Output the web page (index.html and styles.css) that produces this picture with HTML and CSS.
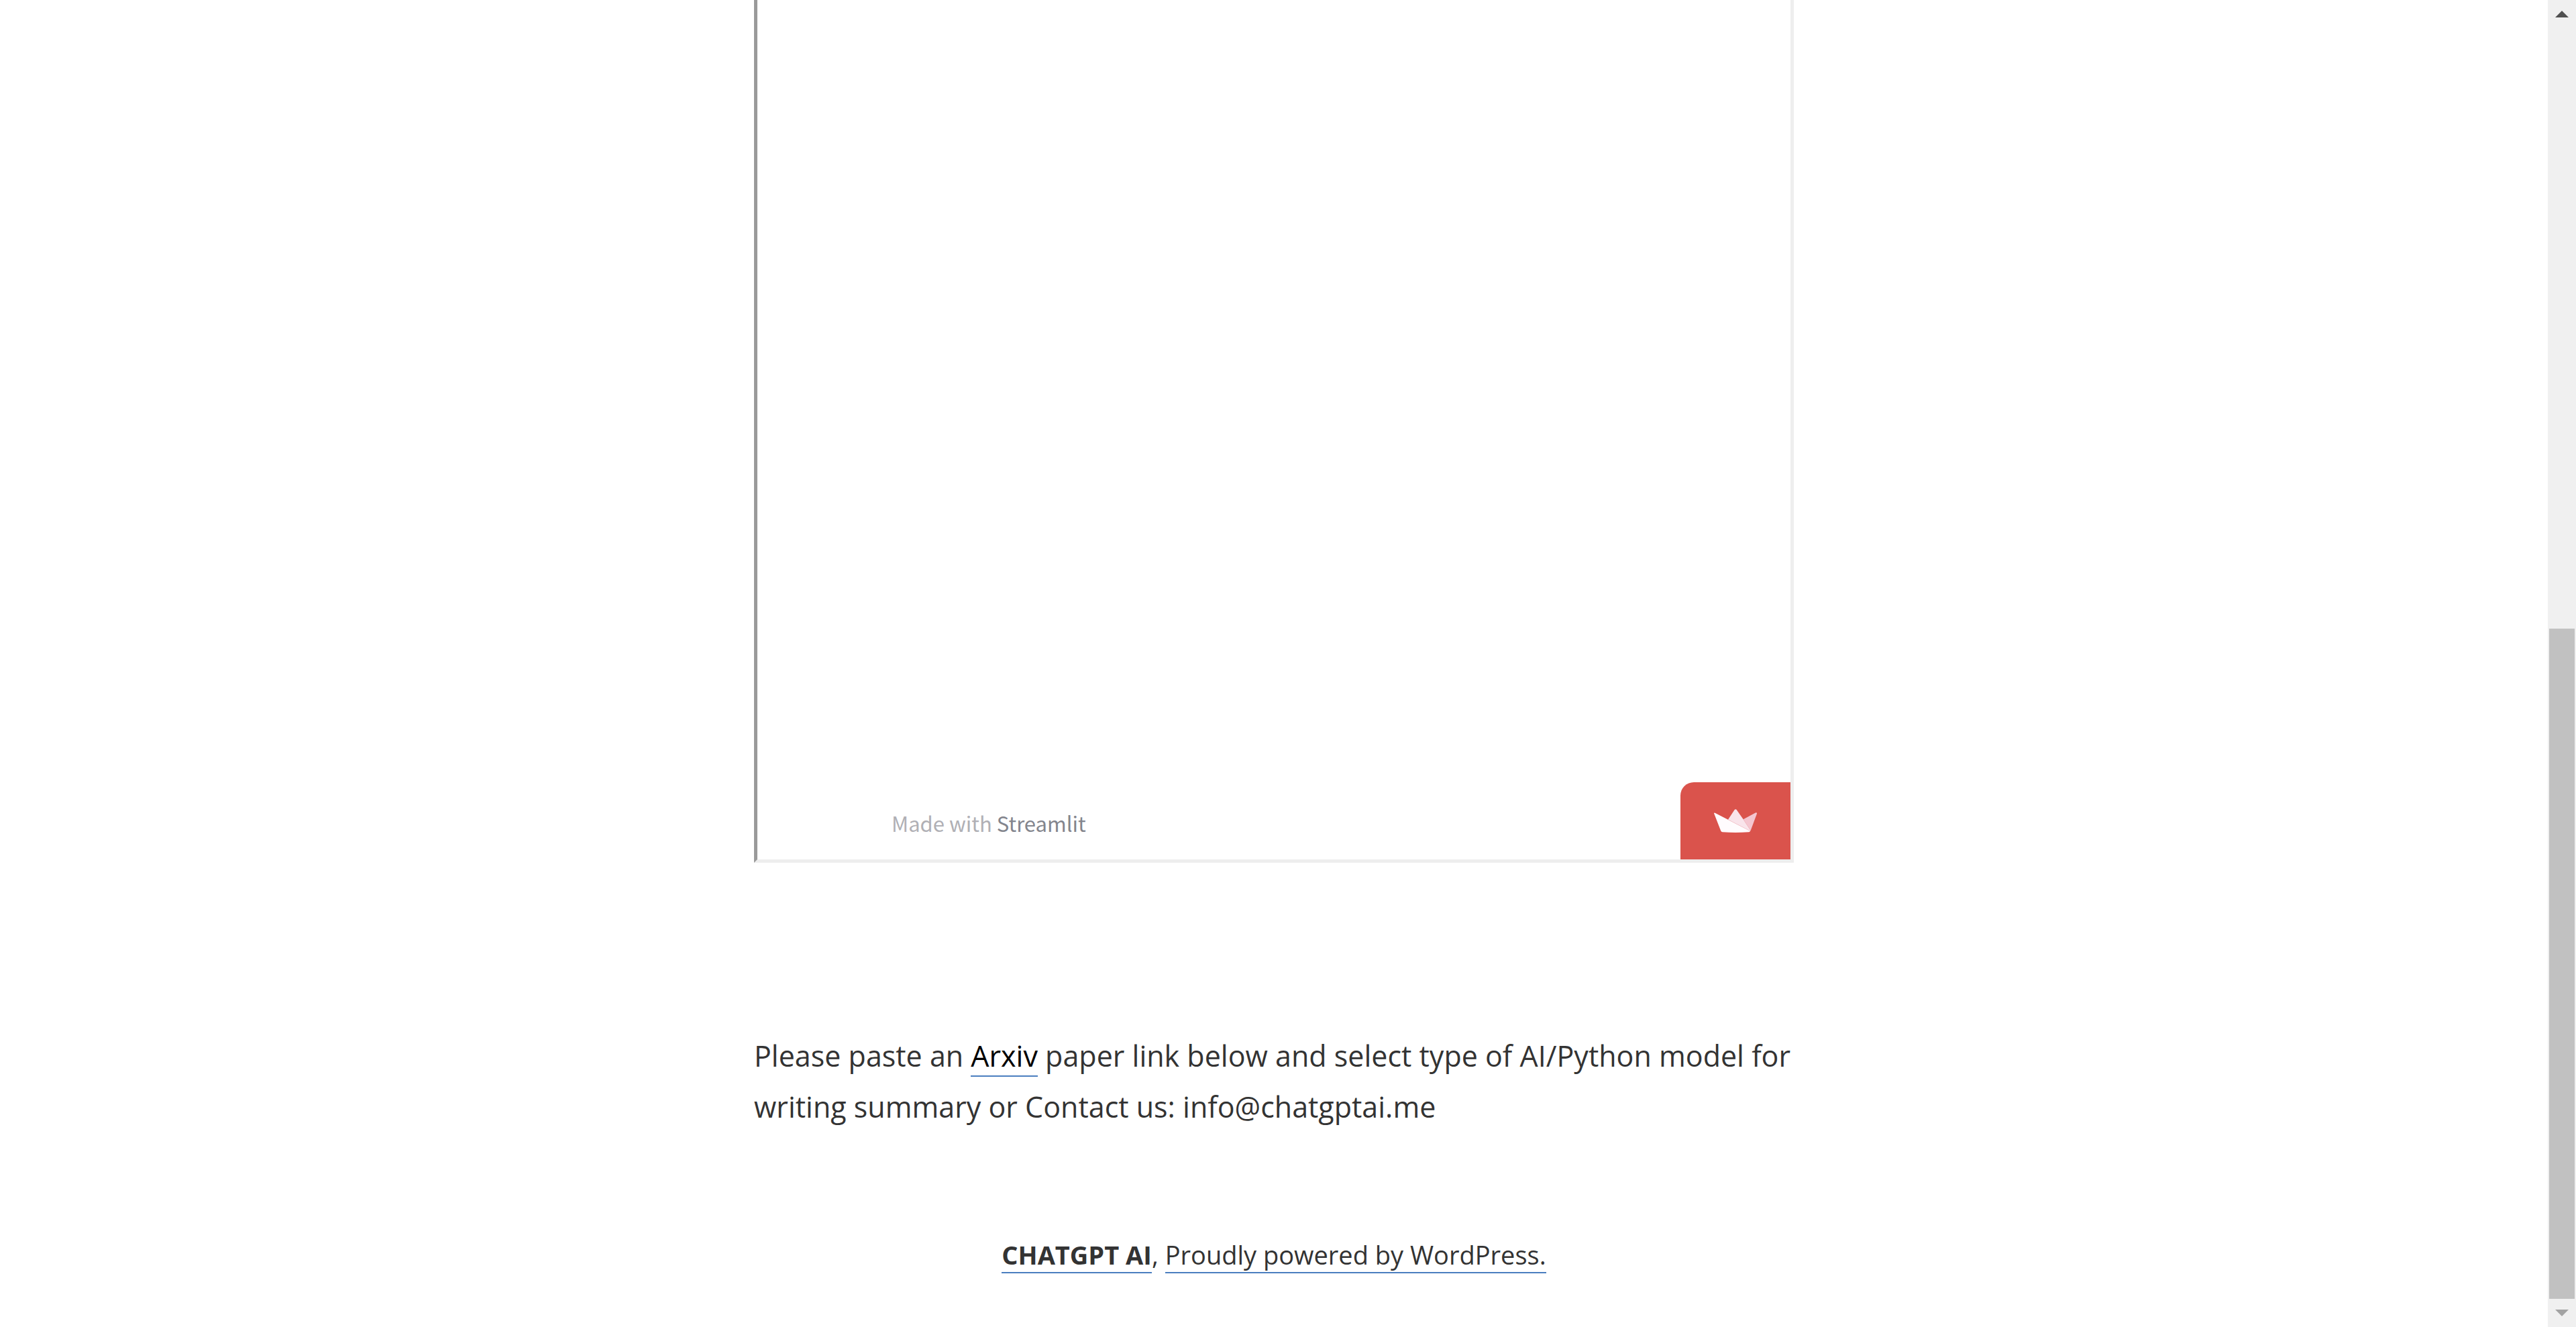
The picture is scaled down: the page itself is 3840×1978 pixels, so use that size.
FILE: index.html
```html
<!DOCTYPE html>
<html lang="en">
<head>
<meta charset="utf-8">
<meta name="viewport" content="width=device-width, initial-scale=1">
<title>CHATGPT AI</title>
<link rel="stylesheet" href="styles.css">
</head>
<body>
<div class="window">
  <div class="page">
    <main class="content">
      <section class="embed" aria-label="Streamlit app">
        <p class="embed-credit">Made with <a href="#streamlit">Streamlit</a></p>
        <a class="embed-badge" href="#cloud" aria-label="Hosted with Streamlit">
          <svg class="crown" viewBox="0 0 192 105" aria-hidden="true">
            <path fill="#f4c6d0" d="M131 46 187 16Q193 15 192 20L164 96Z"/>
            <path fill="#f9e4eb" d="M63 47 92 3Q97-2 101 3L131 46 164 96 161 98Z"/>
            <path fill="#fffcfe" d="M0 19Q1 15 6 18L162 98Q160 103 155 103Q96 107 38 103Q33 102 31 98Z"/>
            <path fill="none" stroke="#f3c3cc" stroke-width="2" d="M63 47 162 98"/>
          </svg>
        </a>
      </section>
      <p class="intro">Please paste an <a href="#arxiv">Arxiv</a> paper link below and select type of AI/Python model for writing summary or Contact us: info@chatgptai.me</p>
    </main>
    <footer class="site-footer"><a class="site-name" href="#home">CHATGPT AI</a>, <a href="#wordpress">Proudly powered by WordPress.</a></footer>
  </div>
  <div class="scrollbar">
    <button class="arrow" type="button" aria-label="Scroll up"><svg viewBox="0 0 20 10"><path fill="#505050" d="M0 10 10 0 20 10Z"/></svg></button>
    <div class="track"><div class="thumb"></div></div>
    <button class="arrow" type="button" aria-label="Scroll down"><svg viewBox="0 0 20 10"><path fill="#a3a3a3" d="M0 0H20L10 10Z"/></svg></button>
  </div>
</div>
</body>
</html>
```
FILE: styles.css
```css
* {
  box-sizing: border-box;
}

body {
  margin: 0;
  background: #fff;
  color: #333;
  font-family: "Segoe UI", "Open Sans", "Noto Sans", sans-serif;
}

.window {
  display: flex;
  min-height: 100vh;
}

.page {
  flex: 1;
  min-width: 0;
  display: flex;
  flex-direction: column;
  align-items: center;
  padding-bottom: 70px;
}

.content {
  flex: 1;
  display: flex;
  flex-direction: column;
  width: 100%;
  max-width: 1550px;
}

/* Embedded app, scrolled past its top edge */
.embed {
  flex: 1;
  display: flex;
  align-items: flex-end;
  justify-content: space-between;
  border: 5px solid #eee;
  border-top: 0;
  border-left-color: #9a9a9a;
}

.embed-credit {
  margin: 0 0 28px 200px;
  font-family: "Source Sans Pro", "Noto Sans CJK SC", sans-serif;
  font-size: 31px;
  line-height: 52px;
  color: #b0b0b5;
}

.embed-credit a {
  color: #83858d;
  text-decoration: none;
}

.embed-badge {
  display: flex;
  align-items: center;
  justify-content: center;
  width: 164px;
  height: 115px;
  border-top-left-radius: 20px;
  background: #da534c;
}

.crown {
  width: 64px;
  height: 35px;
}

.intro {
  margin: 250px 0 0;
  font-size: 43px;
  line-height: 76px;
}

.intro a,
.site-footer a {
  color: #333;
  text-decoration: none;
  border-bottom: 2px solid #4a7ebf;
}

.intro a {
  color: #000;
}

.site-footer {
  margin-top: 144px;
  font-size: 38px;
  line-height: 76px;
}

.site-footer .site-name {
  font-weight: 700;
}

.scrollbar {
  display: flex;
  flex-direction: column;
  width: 42px;
  background: #f0f0f0;
}

.arrow {
  display: flex;
  align-items: center;
  justify-content: center;
  height: 42px;
  padding: 0;
  border: 0;
  background: none;
}

.arrow svg {
  width: 20px;
  height: 10px;
}

.track {
  flex: 1;
  display: grid;
  grid-template-rows: 895fr 999fr;
  padding: 0 2px;
}

.thumb {
  grid-row: 2;
  background: #c1c1c1;
}
```
